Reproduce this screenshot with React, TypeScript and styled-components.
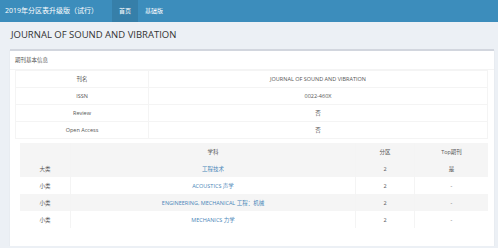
import styled, { createGlobalStyle } from "styled-components";

const GlobalStyle = createGlobalStyle`
  html, body {
    margin: 0;
    padding: 0;
    background: #ecf0f5;
    font-family: "Open Sans", "Noto Sans CJK SC", sans-serif;
    color: #333;
  }
`;

const Header = styled.div`
  height: 22px;
  background: #3c8dbc;
  display: flex;
  align-items: stretch;
`;

const Logo = styled.div`
  color: #fff;
  font-size: 7px;
  line-height: 22px;
  padding-left: 5px;
  width: 107px;
  white-space: nowrap;
`;

const NavItem = styled.div<{ $active?: boolean }>`
  color: #fff;
  font-size: 6px;
  line-height: 22px;
  padding: 0 7px;
  white-space: nowrap;
  background: ${p => (p.$active ? "#367fa9" : "transparent")};
`;

const Content = styled.div`
  padding: 6px 4px 0 10px;
`;

const Title = styled.h1`
  margin: 0;
  font-size: 9.5px;
  font-weight: 400;
  line-height: 14px;
  padding: 0 0 7px 1px;
  color: #333;
`;

const Box = styled.div`
  background: #fff;
  border-top: 2px solid #d2d6de;
  box-shadow: 0 1px 1px rgba(0, 0, 0, 0.1);
  padding-bottom: 18px;
`;

const BoxHeader = styled.div`
  font-size: 5.5px;
  color: #555;
  padding: 4px 5px;
  height: 10px;
  line-height: 10px;
  border-bottom: 1px solid #f4f4f4;
`;

const BoxBody = styled.div`
  padding: 0 6px 0 5px;
`;

const InfoTable = styled.table`
  width: 100%;
  border-collapse: collapse;
  font-size: 5.5px;
  color: #555;
  td {
    border: 1px solid #f4f4f4;
    text-align: center;
    height: 16px;
    padding: 0;
  }
`;

const SubjectTable = styled.table`
  width: calc(100% - 5px);
  margin: 4px 0 0 5px;
  border-collapse: collapse;
  font-size: 5.5px;
  color: #555;
  th, td {
    height: 17px;
    padding: 0;
    font-weight: 400;
    text-align: center;
    border-left: 1px solid #f4f4f4;
  }
  th:first-child, td:first-child {
    border-left: none;
  }
  tr:nth-child(odd) {
    background: #f5f5f5;
  }
`;

const Link = styled.span`
  color: #4a86b8;
`;

const info: [string, string][] = [
  ["刊名", "JOURNAL OF SOUND AND VIBRATION"],
  ["ISSN", "0022-460X"],
  ["Review", "否"],
  ["Open Access", "否"],
];

const subjects = [
  ["大类", "工程技术", "2", "是"],
  ["小类", "ACOUSTICS 声学", "2", "-"],
  ["小类", "ENGINEERING, MECHANICAL 工程：机械", "2", "-"],
  ["小类", "MECHANICS 力学", "2", "-"],
];

export default function App() {
  return (
    <>
      <GlobalStyle />
      <Header>
        <Logo>2019年分区表升级版（试行）</Logo>
        <NavItem $active>首页</NavItem>
        <NavItem>基础版</NavItem>
      </Header>
      <Content>
        <Title>JOURNAL OF SOUND AND VIBRATION</Title>
        <Box>
          <BoxHeader>期刊基本信息</BoxHeader>
          <BoxBody>
            <InfoTable>
              <tbody>
                {info.map(([k, v]) => (
                  <tr key={k}>
                    <td style={{ width: 132 }}>{k}</td>
                    <td>{v}</td>
                  </tr>
                ))}
              </tbody>
            </InfoTable>
            <SubjectTable>
              <thead>
                <tr>
                  <th style={{ width: 50 }}></th>
                  <th>学科</th>
                  <th style={{ width: 58 }}>分区</th>
                  <th style={{ width: 73 }}>Top期刊</th>
                </tr>
              </thead>
              <tbody>
                {subjects.map((r, i) => (
                  <tr key={i}>
                    <td>{r[0]}</td>
                    <td><Link>{r[1]}</Link></td>
                    <td>{r[2]}</td>
                    <td>{r[3]}</td>
                  </tr>
                ))}
              </tbody>
            </SubjectTable>
          </BoxBody>
        </Box>
      </Content>
    </>
  );
}
